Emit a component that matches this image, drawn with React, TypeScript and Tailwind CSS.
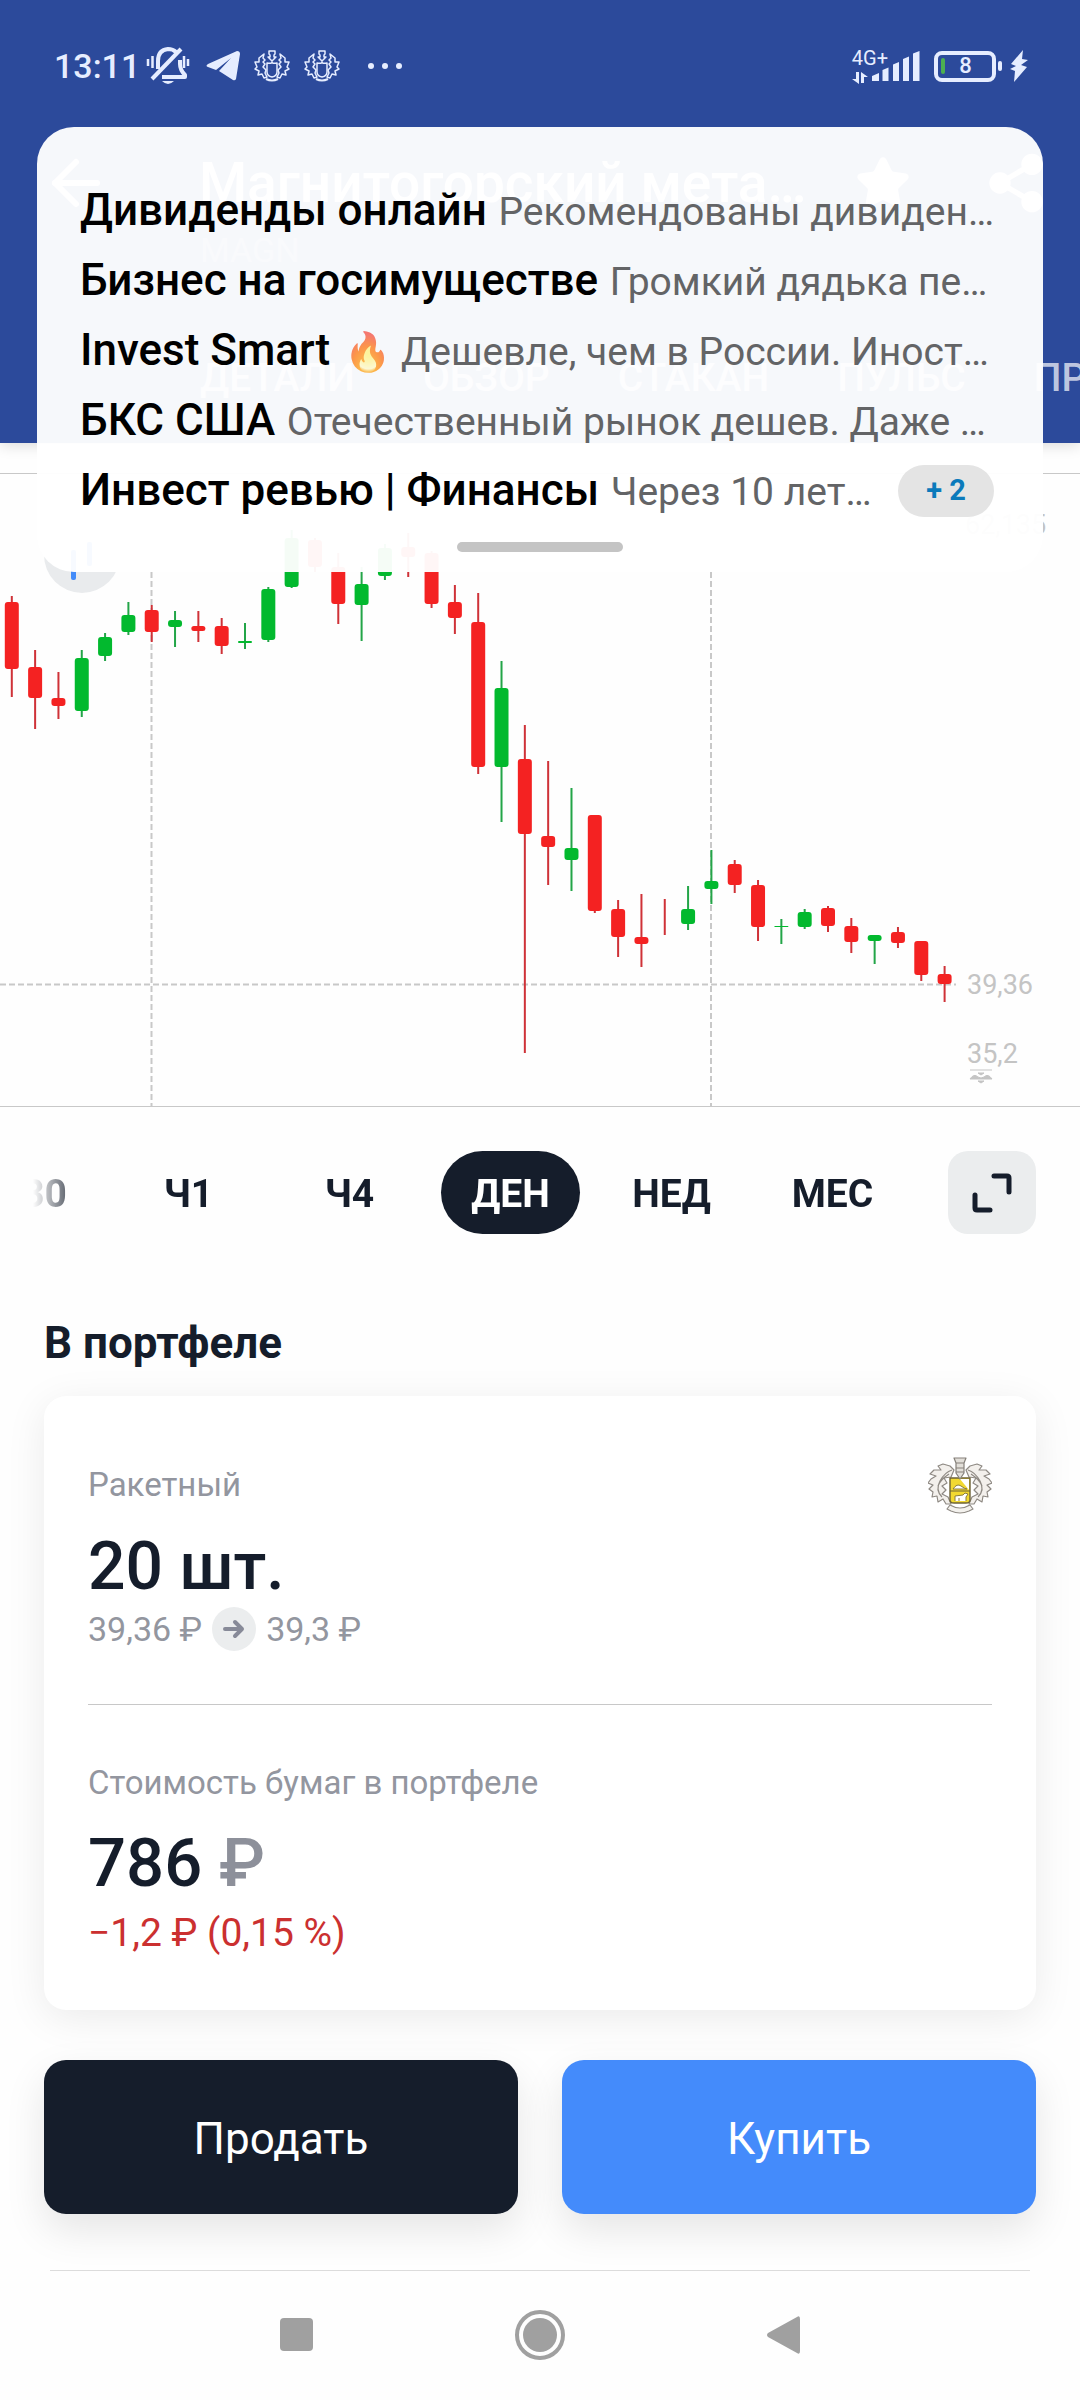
import { ArrowLeft, Share2, Star } from "lucide-react";

type Candle = { up: boolean; high: number; low: number; top: number; bottom: number };
type Message = { title: string; text: string; fire?: boolean };

const c = (up: boolean, high: number, low: number, top: number, bottom: number): Candle => ({ up, high, low, top, bottom });

// y values in chart pixels, measured from the top rule of the chart
const candles: Candle[] = [
  c(false, 123, 224, 129, 196),
  c(false, 177, 256, 194, 225),
  c(false, 199, 246, 225, 233),
  c(true, 177, 244, 185, 238),
  c(true, 160, 188, 164, 183),
  c(true, 129, 162, 142, 159),
  c(false, 132, 169, 137, 159),
  c(true, 138, 174, 147, 154),
  c(false, 138, 169, 153, 158),
  c(false, 145, 181, 153, 173),
  c(true, 150, 176, 168, 170),
  c(true, 114, 169, 116, 167),
  c(true, 57, 115, 65, 114),
  c(false, 65, 99, 67, 94),
  c(false, 80, 151, 94, 131),
  c(true, 94, 168, 111, 132),
  c(true, 71, 107, 75, 103),
  c(false, 60, 104, 74, 84),
  c(false, 78, 135, 80, 131),
  c(false, 112, 161, 129, 145),
  c(false, 120, 301, 149, 294),
  c(true, 188, 349, 215, 294),
  c(false, 252, 580, 286, 361),
  c(false, 288, 412, 363, 374),
  c(true, 315, 418, 375, 387),
  c(false, 342, 440, 342, 438),
  c(false, 427, 484, 436, 464),
  c(false, 421, 494, 464, 471),
  c(false, 426, 462, 0, 0),
  c(true, 413, 457, 436, 451),
  c(true, 377, 431, 408, 416),
  c(false, 387, 420, 391, 412),
  c(false, 407, 468, 412, 454),
  c(true, 446, 471, 453, 454),
  c(true, 436, 456, 439, 454),
  c(false, 433, 459, 435, 453),
  c(false, 445, 480, 453, 469),
  c(true, 462, 491, 462, 468),
  c(false, 454, 475, 459, 470),
  c(false, 468, 508, 468, 502),
  c(false, 493, 529, 501, 511),
];

const messages: Message[] = [
  { title: "Дивиденды онлайн", text: "Рекомендованы дивиденды по акциям" },
  { title: "Бизнес на госимуществе", text: "Громкий дядька передал привет" },
  { title: "Invest Smart", text: "Дешевле, чем в России. Иностранные акции", fire: true },
  { title: "БКС США", text: "Отечественный рынок дешев. Даже очень" },
  { title: "Инвест ревью | Финансы", text: "Через 10 летних недель" },
];

const tabs = ["ДЕТАЛИ", "ОБЗОР", "СТАКАН", "ПУЛЬС", "ПРОГНОЗЫ"];
const periods = ["М30", "Ч1", "Ч4", "ДЕН", "НЕД", "МЕС"];

function CrestOutline() {
  return (
    <svg viewBox="0 0 36 32" className="h-8 w-9" fill="none" stroke="currentColor" strokeWidth="1.5" strokeLinejoin="round">
      <path d="M15 1h6v3l-1 1v2h2l-4 4-4-4h2V5l-1-1z" />
      <path d="M13 13q5 1 5-1 0 2 5 1v9q0 4-5 5-5-1-5-5z" />
      <path d="M11 10 9 8l1-4-5 4v4l-4 0 2 5-2 2 4 2-1 4 4-1 2 4 3-1-2-4 1-3-3-3 2-3-2-2z" />
      <path d="M25 10l2-2-1-4 5 4v4l4 0-2 5 2 2-4 2 1 4-4-1-2 4-3-1 2-4-1-3 3-3-2-3 2-2z" />
      <path d="M12 29q6 3 12 0" strokeWidth="2" />
    </svg>
  );
}

function CrestColor() {
  return (
    <svg viewBox="0 0 64 58" className="h-[58px] w-16" fill="none" strokeLinejoin="round" role="img" aria-label="Герб">
      <g stroke="#8f8a84" strokeWidth="1.2">
        <path
          fill="#f3f0ec"
          d="M26 14 22 10 15 8 10 10 13 14 6 14 2 18 8 20 3 23 0 27 5 29 1 33 5 36 4 41 9 40 10 46 15 43 18 48 23 48 20 41 14 38 18 34 14 30 19 27 16 22 23 21z"
        />
        <path
          fill="#f3f0ec"
          d="M38 14 42 10 49 8 54 10 51 14 58 14 62 18 56 20 61 23 64 27 59 29 63 33 59 36 60 41 55 40 54 46 49 43 46 48 41 48 44 41 50 38 46 34 50 30 45 27 48 22 41 21z"
        />
        <path d="M24 14q-7 2-12 11t2 16M21 18q-9 6-11 12M40 14q7 2 12 11t-2 16M43 18q9 6 11 12" />
        <path d="M22 49q10 6 20 0l3 4-4 2q-9 4-18 0l-4-2z" fill="#f4f2ee" />
      </g>
      <path d="M22 22h20v22q0 3-4 3H26q-4 0-4-3z" fill="#f2d931" stroke="#6d6237" strokeWidth="1.4" />
      <path d="M32 23h9v11z" fill="#fff" />
      <path d="M22 35h20" stroke="#6d6237" />
      <path d="M25 33q4-6 8-3t6 3z" fill="#fff" stroke="#8b7d3c" />
      <path d="M27 45v-5l8-1 2-2 3 1-2 3v4M31 45v-3" fill="#fff" stroke="#8b7d3c" />
      <path d="M26 2h12l-2 5h-8zM28 7h8v10l-4 6-4-6zM28 12h8M28 16h8" fill="#e2dfd9" stroke="#85807a" strokeWidth="1.2" />
    </svg>
  );
}

function StatusBar() {
  return (
    <div className="flex h-[132px] items-center justify-between pl-[54px] pr-[52px] text-[#e6edff]">
      <div className="flex items-center">
        <span className="text-[34px] font-medium leading-10">13:11</span>
        <svg viewBox="0 0 44 38" className="ml-1.5 h-[38px] w-11" fill="none" stroke="currentColor" strokeWidth="4" strokeLinejoin="round">
          <path d="M12 22V14q0-11 10-12 5 0 8 3M34 13V17q0 6 5 11v2H16" />
          <path d="M6 32 35 2" />
          <path d="M2 12v7M6.500 9v12M38 9v12M42 12v7" strokeWidth="2.500" />
          <path d="M16 34h12q-6 6-12 0" fill="currentColor" stroke="none" />
        </svg>
        <svg viewBox="0 0 34 30" className="ml-4 h-[30px] w-[34px]" fill="currentColor">
          <path d="M31 0 2 13q-3 2 0 3l8 3L25 7 13 20l14 9q2 1 3-1L34 3q0-3-3-3" />
        </svg>
        <div className="ml-3.5 flex gap-3.5">
          <CrestOutline />
          <CrestOutline />
        </div>
        <div className="ml-7 flex gap-2">
          <span className="size-1.5 rounded-full bg-current" />
          <span className="size-1.5 rounded-full bg-current" />
          <span className="size-1.5 rounded-full bg-current" />
        </div>
      </div>
      <div className="flex items-center">
        <div className="flex h-9 flex-col justify-between">
          <span className="text-xl leading-5">4G+</span>
          <svg viewBox="0 0 16 12" className="h-3 w-4" fill="currentColor">
            <path d="M4 0h3v12L0 7h4zM9 0l7 5h-4v6H9z" />
          </svg>
        </div>
        <svg viewBox="0 0 48 30" className="-ml-4 h-[30px] w-12" fill="currentColor">
          <path d="M0 30v-5l7-3v8zM10.500 30V19l6-2.500V30zM21 30V13.500l6-2.500v19zM31 30V8l6-2.500V30zM41 30V2.500L47.500 0v30z" />
        </svg>
        <div className="ml-3.5 flex h-[31px] w-[62px] items-center rounded-lg border-4 border-current">
          <span className="ml-[3px] h-4 w-1 rounded-full bg-[#4caf50]" />
          <span className="flex-1 pr-1.5 text-center text-[22px] font-medium leading-6">8</span>
        </div>
        <span className="ml-0.5 h-2.5 w-1 rounded-sm bg-current" />
        <svg viewBox="0 0 18 32" className="ml-2 h-8 w-[18px]" fill="currentColor">
          <path d="M13 0 1 14l5 2-6 3 5 2-1 11 13-15-6-2 7-5-6-1z" />
        </svg>
      </div>
    </div>
  );
}

function Notification() {
  return (
    <section className="absolute inset-x-[37px] top-[127px] flex h-[445px] flex-col rounded-[37px] bg-white/96 pl-[43px] pr-[49px] pt-[49px]">
      <ul>
        {messages.map((m, i) => (
          <li key={m.title} className="flex h-[70px] items-center">
            <p className="min-w-0 flex-1 truncate text-[39px] leading-[70px] text-[#636466]">
              <span className="mr-0.5 text-[44px] font-medium text-black">{m.title}</span>
              {m.fire && <span className="pl-3 text-[38px] opacity-70">🔥</span>} {m.text}
            </p>
            {i === messages.length - 1 && (
              <button className="ml-5 h-[52px] w-24 shrink-0 rounded-full bg-[#e4e4e4] text-[29px] font-bold text-[#0b7abb]">+ 2</button>
            )}
          </li>
        ))}
      </ul>
      <div className="ml-[377px] mt-4 h-2.5 w-[166px] rounded-full bg-[#c4c4c4]" />
    </section>
  );
}

function Chart() {
  return (
    <section className="relative mt-[30px] border-y border-[#c8c8c8]">
      <svg viewBox="0 0 1080 632" className="block w-full" role="img" aria-label="График цены">
        <g stroke="#c8c8c8" strokeWidth="2" strokeDasharray="6 3">
          <path d="M151.500 98V632M711 98V632M0 510.500H956" />
        </g>
        {candles.map((k, i) => {
          const x = 11.8 + 23.32 * i;
          const color = k.up ? "#02b92e" : "#f42222";
          return (
            <g key={i} fill={color}>
              <rect x={x - 1} y={k.high - 1} width="2" height={k.low - k.high} fill={k.up ? "#23a548" : "#cf3238"} />
              <rect x={x - 7} y={k.top - 1} width="14" height={k.bottom - k.top} rx={Math.min(3, (k.bottom - k.top) / 2)} />
            </g>
          );
        })}
        <g fill="#c4c4c4" fontSize="27" fontFamily="Roboto, sans-serif">
          <text x="965" y="60">62,135</text>
          <text x="967" y="520">39,36</text>
          <text x="967" y="589">35,2</text>
        </g>
        <path d="M970 596h22M978 599l3 2 3-2zM970 605q4-6 8-2 3 2 6 0 4-4 8 2zM978 607h6l-3 2z" fill="#c4c4c4" stroke="#c4c4c4" strokeWidth="1" />
      </svg>
      <div className="absolute left-11 top-[43px] flex size-[76px] items-center justify-center rounded-full bg-[#e9ebed]">
        <svg viewBox="0 0 34 50" className="h-[50px] w-[34px]" fill="#428bf9">
          <rect x="6" y="20" width="5" height="30" rx="2" />
          <rect x="22" y="12" width="5" height="24" rx="2" />
        </svg>
      </div>
    </section>
  );
}

export default function App() {
  return (
    <div className="relative flex min-h-screen flex-col bg-[#fefefe] font-[Roboto,sans-serif] text-[#151d2b]">
      <header className="h-[443px] overflow-hidden bg-[#2c4a9b] shadow-[0_2px_14px_rgba(0,0,0,0.15)]">
        <StatusBar />
        <div className="flex h-[102px] items-center pl-10 pr-8 text-white">
          <ArrowLeft className="size-[72px]" strokeWidth={2} />
          <h1 className="ml-[87px] w-[620px] text-[55px] font-medium leading-[60px]">Магнитогорский мета…</h1>
          <Star className="ml-9 size-14 fill-white" />
          <Share2 className="ml-auto size-16 fill-white" strokeWidth={2} />
        </div>
        <p className="h-[114px] pl-[200px] text-[34px] leading-8 text-white/30">MAGN</p>
        <nav className="flex gap-[68px] whitespace-nowrap pl-[200px] text-[39px] font-medium leading-[60px] text-white/70">
          {tabs.map((t) => (
            <a key={t} href="#">
              {t}
            </a>
          ))}
        </nav>
      </header>

      <Chart />

      <div className="mt-11 flex items-center justify-between pl-[33px] pr-11">
        <div className="flex flex-1 justify-end overflow-hidden [mask-image:linear-gradient(to_right,transparent,black_50px)]">
          {periods.map((p) => (
            <button key={p} className="flex w-[161px] shrink-0 justify-center text-[39px] font-bold">
              <span
                className={
                  p === "ДЕН"
                    ? "flex h-[83px] w-[139px] items-center justify-center rounded-full bg-[#151d2b] pt-1 text-white"
                    : "flex h-[83px] items-center pt-1"
                }
              >
                {p}
              </span>
            </button>
          ))}
        </div>
        <button aria-label="На весь экран" className="ml-[35px] flex h-[83px] w-[88px] items-center justify-center rounded-[20px] bg-[#ebedee]">
          <svg viewBox="0 0 40 40" className="size-10" fill="none" stroke="#151d2b" strokeWidth="5" strokeLinecap="round" strokeLinejoin="round">
            <path d="M22 3h13q2 0 2 2v14M3 22v13q0 2 2 2h13" />
          </svg>
        </button>
      </div>

      <h2 className="mt-[81px] px-11 text-[44px] font-bold leading-[56px]">В портфеле</h2>

      <section className="mx-11 mt-[25px] rounded-[22px] bg-white px-11 pb-[54px] pt-[60px] shadow-[0_8px_40px_rgba(0,0,0,0.08)]">
        <div className="flex h-[58px] items-center justify-between">
          <h3 className="text-[33px] leading-10 text-[#93969f]">Ракетный</h3>
          <CrestColor />
        </div>
        <p className="mt-[13px] text-[66px] font-medium leading-[80px]">20 шт.</p>
        <p className="flex h-11 items-center gap-2.5 text-[34px] leading-10 text-[#93969f]">
          39,36 ₽
          <span className="flex size-11 items-center justify-center rounded-full bg-[#ebedee]">
            <svg viewBox="0 0 24 24" className="size-6" fill="none" stroke="#878a98" strokeWidth="4" strokeLinecap="round" strokeLinejoin="round">
              <path d="M3 12h17M13 5l7 7-7 7" />
            </svg>
          </span>
          39,3 ₽
        </p>
        <hr className="mt-[53px] border-t border-[#c8c8c8]" />
        <h3 className="mt-[58px] text-[33px] leading-10 text-[#93969f]">Стоимость бумаг в портфеле</h3>
        <p className="mt-5 text-[67px] font-medium leading-[80px]">
          786 <span className="text-[#8d909a]">₽</span>
        </p>
        <p className="mt-[7px] text-[39px] leading-[46px] text-[#cb3030]">−1,2 ₽ (0,15 %)</p>
      </section>

      <div className="mt-[50px] flex gap-11 px-11 text-[44px] text-white">
        <button className="h-[154px] flex-1 rounded-[22px] bg-[#151d2b] pt-1 shadow-[0_16px_40px_rgba(0,0,0,0.1)]">Продать</button>
        <button className="h-[154px] flex-1 rounded-[22px] bg-[#448bfb] pt-1 shadow-[0_16px_40px_rgba(0,0,0,0.1)]">Купить</button>
      </div>

      <footer className="mx-[50px] mt-14 flex h-32 items-center justify-center gap-[202px] border-t border-[#dcdcdc] text-[#a0a0a0]">
        <button aria-label="Недавние" className="size-[33px] rounded-sm bg-current" />
        <button aria-label="Домой" className="flex size-[50px] items-center justify-center rounded-full border-4 border-current">
          <span className="size-[34px] rounded-full bg-current" />
        </button>
        <button aria-label="Назад">
          <svg viewBox="0 0 33 38" className="h-[38px] w-[33px]" fill="currentColor">
            <path d="M30 1q3-2 3 2v32q0 4-3 2L1 21q-2-2 0-4z" />
          </svg>
        </button>
      </footer>

      <Notification />
    </div>
  );
}
